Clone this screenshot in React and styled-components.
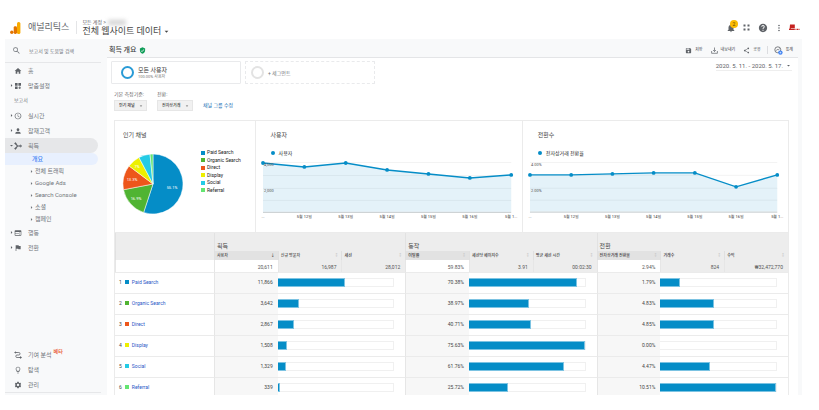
import React from "react";
import styled, { createGlobalStyle } from "styled-components";
import {
  MdAccessTime,
  MdApps,
  MdArrowDropDown,
  MdArrowRight,
  MdFlag,
  MdHelp,
  MdHome,
  MdMoreVert,
  MdNotifications,
  MdOutlineLightbulb,
  MdPerson,
  MdSave,
  MdSearch,
  MdSettings,
  MdShare,
  MdVerifiedUser,
  MdWeb,
} from "react-icons/md";

const GlobalStyle = createGlobalStyle`
  * {
    box-sizing: border-box;
  }

  body {
    margin: 0;
    background: #fff;
    color: #444;
    font-family: Roboto, "Noto Sans CJK KR", sans-serif;
    font-size: 6px;
    line-height: 8px;
  }

  a {
    color: inherit;
    text-decoration: none;
  }

  button, select, input {
    font: inherit;
    color: inherit;
    border: 0;
    padding: 0;
    margin: 0;
    background: none;
  }

  svg {
    display: block;
    flex-shrink: 0;
  }
`;

// Page shell
const Page = styled.div`
  padding: 0 17px 15px 5px;
`;

const Header = styled.header`
  display: flex;
  align-items: center;
  height: 39px;
  padding: 18px 3px 2px 5px;
`;

const Brand = styled.a`
  display: flex;
  align-items: center;
  gap: 7px;
  padding-right: 7px;
  border-right: 1px solid #e4e5e7;
  color: #5f6368;
  font-size: 9px;
  line-height: 13px;
`;

const PropertyPicker = styled.button`
  display: block;
  margin-left: 5px;
  text-align: left;
  color: #444;
`;

const Account = styled.span`
  display: flex;
  align-items: center;
  gap: 2px;
  color: #5f6368;
  font-size: 5px;
  line-height: 7px;
`;

const HiddenName = styled.i`
  width: 18px;
  height: 5px;
  background: #d3d3d3;
  filter: blur(2px);
`;

const Property = styled.span`
  display: flex;
  align-items: center;
  gap: 1px;
  font-size: 9px;
  line-height: 11px;
`;

const HeaderTools = styled.div`
  display: flex;
  align-items: center;
  gap: 7px;
  margin-left: auto;
  color: #5f6368;
`;

const IconButton = styled.button`
  position: relative;
  display: flex;
  justify-content: center;
  width: 9px;
`;

const Badge = styled.span`
  position: absolute;
  top: -3px;
  right: -3px;
  width: 8px;
  height: 8px;
  border-radius: 4px;
  background: #fbbc04;
  color: #5f4300;
  font-size: 5px;
  line-height: 8px;
  text-align: center;
`;

const Body = styled.div`
  display: grid;
  grid-template-columns: 102px minmax(0, 1fr);
  background: #f8f9fa;
`;

// Sidebar
const Sidebar = styled.nav`
  display: flex;
  flex-direction: column;
  color: #70757a;
`;

const Search = styled.label`
  display: flex;
  align-items: center;
  gap: 8px;
  height: 24px;
  margin-right: 6px;
  padding-left: 7px;
  border-bottom: 1px solid #e6e7e9;

  input {
    width: 64px;
    font-size: 5px;
    outline: none;
  }

  input::placeholder {
    color: #70757a;
    opacity: 1;
  }
`;

const NavItem = styled.a`
  display: grid;
  grid-template-columns: 6px 8px auto 1fr;
  align-items: center;
  height: 15px;
  margin-right: 9px;
  padding-left: 3px;
  border-radius: 0 8px 8px 0;
  background: ${({ $open }) => ($open ? "#e6e7e9" : "none")};

  svg {
    color: #5f6368;
  }
`;

const NavLabel = styled.span`
  margin-left: 6px;
`;

const Beta = styled.sup`
  margin-left: 2px;
  color: #e8501c;
  font-size: 5px;
  font-weight: 500;
  line-height: 8px;
  align-self: start;
`;

const NavHeading = styled.div`
  padding-left: 9px;
  font-size: 5px;
  line-height: 15px;
`;

const SubItem = styled.a`
  display: flex;
  align-items: center;
  height: 12px;
  margin-right: 9px;
  padding-left: ${({ $current }) => ($current ? "27px" : "23px")};
  border-radius: 0 6px 6px 0;
  background: ${({ $current }) => ($current ? "#e8f0fe" : "none")};
  color: ${({ $current }) => ($current ? "#4285f4" : "#70757a")};
  font-weight: ${({ $current }) => ($current ? 500 : 400)};
`;

const NavFooter = styled.div`
  margin: auto 6px 2px 0;
  border-bottom: 1px solid #e6e7e9;
`;

// Main area
const Main = styled.main`
  min-width: 0;
`;

const TitleBar = styled.div`
  display: flex;
  align-items: center;
  justify-content: space-between;
  height: 19px;
  margin-right: 4px;
  padding: 4px 5px 0 2px;
  border-bottom: 1px solid #e4e5e7;
`;

const Title = styled.h1`
  display: flex;
  align-items: center;
  gap: 2px;
  margin: 0;
  font-size: 7px;
  font-weight: 500;
`;

const Actions = styled.div`
  display: flex;
  align-items: center;
  gap: 8px;
`;

const Action = styled.button`
  display: flex;
  align-items: center;
  gap: 3px;
  color: #5f6368;
  font-size: 4px;
  font-weight: 500;
`;

const Divider = styled.span`
  width: 1px;
  height: 8px;
  margin: 0 -2px;
  background: #dcdde0;
`;

const Sheet = styled.div`
  margin-right: 4px;
  padding: 3px 9px 0 7px;
  background: #fff;
`;

const SegmentRow = styled.div`
  display: flex;
  gap: 4px;
  margin: 0 -3px;
`;

const Segment = styled.button`
  display: flex;
  align-items: center;
  gap: 4px;
  width: 130px;
  height: 23px;
  padding-left: ${({ $empty }) => ($empty ? "5px" : "9px")};
  border: 1px ${({ $empty }) => ($empty ? "dashed" : "solid")} #e9eaec;
  border-radius: 1px;
  text-align: left;
  color: ${({ $empty }) => ($empty ? "#70757a" : "#333")};
  font-size: ${({ $empty }) => ($empty ? "5px" : "6px")};

  small {
    display: block;
    color: #777;
    font-size: 4px;
    line-height: 5px;
  }
`;

const Ring = styled.span`
  width: 13px;
  height: 13px;
  border: 2px solid ${({ $empty }) => ($empty ? "#e3e3e3" : "#2a9bd6")};
  border-radius: 50%;
`;

const DateRange = styled.button`
  display: flex;
  align-items: center;
  gap: 2px;
  height: 10px;
  margin-left: auto;
  border-bottom: 1px solid #eee;
  color: #5f6368;
`;

const Filters = styled.div`
  display: flex;
  align-items: flex-end;
  gap: 10px;
  margin-top: 6px;
  padding-bottom: 9px;
`;

const Field = styled.label`
  display: flex;
  flex-direction: column;
  gap: 2px;
  width: ${({ $width }) => $width};
  color: #666;
  font-size: 5px;
  white-space: nowrap;
`;

const SelectBox = styled.span`
  display: flex;
  align-items: center;
  height: 11px;
  padding: 0 2px 0 4px;
  border: 1px solid #e6e6e6;
  background: #f1f1f1;

  select {
    flex: 1;
    min-width: 0;
    appearance: none;
    color: #333;
    font-size: 4px;
    font-weight: 500;
    line-height: 8px;
  }
`;

const TextLink = styled.a`
  color: #1a6fb5;
  font-size: 5px;
  line-height: 11px;
`;

// Chart cards
const Charts = styled.section`
  display: grid;
  grid-template-columns: 140fr 268fr 267fr;
  height: 113px;
  border: 1px solid #ebebeb;
`;

const Card = styled.div`
  min-width: 0;
  padding-top: 10px;

  & + & {
    border-left: 1px solid #ebebeb;
  }

  h2 {
    margin: 0 0 10px;
    padding-left: ${({ $pie }) => ($pie ? "8px" : "15px")};
    font-size: 6px;
    font-weight: 400;
  }
`;

const PieRow = styled.div`
  display: flex;
  gap: 17px;
  padding-left: 7px;

  svg {
    margin-top: 4px;
  }
`;

const PieLegend = styled.ul`
  display: flex;
  flex-direction: column;
  justify-content: space-between;
  height: 45px;
  margin: 0;
  padding: 0;
  list-style: none;
  color: #222;
  font-size: 5px;
  line-height: 7px;
  white-space: nowrap;

  li {
    display: flex;
    align-items: center;
    gap: 2px;
  }
`;

const Swatch = styled.i`
  width: 4px;
  height: 4px;
  background: ${({ $color }) => $color};
`;

const LineLegend = styled.div`
  display: flex;
  align-items: center;
  gap: 4px;
  padding-left: 15px;
  color: #222;
  font-size: 5px;
  line-height: 8px;

  i {
    width: 4px;
    height: 4px;
    border-radius: 2px;
    background: #058dc7;
  }
`;

// Report table
const Report = styled.table`
  width: 100%;
  table-layout: fixed;
  border-collapse: separate;
  border-spacing: 0;
  border: solid #ebebeb;
  border-width: 0 1px;
  font-size: 5px;
  line-height: 8px;
`;

const GroupCell = styled.th`
  height: 18px;
  padding: 7px 2px 0;
  border-left: 1px solid #e2e2e2;
  background: #ededed;
  font-size: 6px;
  font-weight: 400;
  text-align: left;
`;

const SortCell = styled.th`
  height: 9px;
  padding: 0;
  border-left: 1px solid #e0e0e0;
  background: ${({ $main }) => ($main ? "#e2e2e2" : "#ededed")};
  font-weight: 500;

  button {
    display: flex;
    justify-content: space-between;
    width: 100%;
    padding: 0 3px 0 2px;
    color: #333;
    font-size: 4px;
    line-height: 9px;
    white-space: nowrap;
  }

  i {
    color: ${({ $sorted }) => ($sorted ? "#333" : "#c4c4c4")};
    font-style: normal;
  }
`;

const TotalCell = styled.td`
  height: 12px;
  padding: 2px 5px 0 0;
  border-left: 1px solid #e6e6e6;
  background: ${({ $main }) => ($main ? "#fff" : "#ededed")};
  color: #555;
  text-align: right;
`;

const Row = styled.tr`
  height: 21px;

  &:last-child {
    height: 18px;
  }

  td {
    padding: 0;
    border-top: 1px solid #ebebeb;
    vertical-align: top;
  }
`;

const Channel = styled.div`
  display: flex;
  align-items: center;
  gap: 3px;
  padding: 5px 0 0 4px;

  a {
    color: #2a56c6;
  }
`;

const ValueCell = styled.td`
  border-left: 1px solid #e6e6e6;
  background: #f7f7f7;
  text-align: right;

  div {
    padding: 5px 5px 0 0;
  }
`;

const Track = styled.div`
  height: 9px;
  margin: 5px 11px 0 0;
  border: 1px solid #f0f0f0;
  border-left: 0;
`;

const Bar = styled.div`
  height: 9px;
  margin-top: -1px;
  border: solid #7cc3e2;
  border-width: ${({ $empty }) => ($empty ? "0" : "1px 1px 1px 0")};
  background: #058dc7;
`;

const channels = [
  { name: "Paid Search", color: "#058dc7", users: 11866, bounce: "70.38%", rate: "1.79%", bars: [58, 93, 17] },
  { name: "Organic Search", color: "#50b432", users: 3642, bounce: "38.97%", rate: "4.83%", bars: [18, 52, 46] },
  { name: "Direct", color: "#ed561b", users: 2867, bounce: "40.71%", rate: "4.85%", bars: [14, 54, 46] },
  { name: "Display", color: "#edef00", users: 1508, bounce: "75.63%", rate: "0.00%", bars: [8, 100, 0] },
  { name: "Social", color: "#24cbe5", users: 1329, bounce: "61.76%", rate: "4.47%", bars: [7, 82, 43] },
  { name: "Referral", color: "#64e572", users: 339, bounce: "25.72%", rate: "10.51%", bars: [2, 34, 100] },
];

const columns = [
  { label: "사용자", total: "20,611", main: true, sorted: true },
  { label: "신규 방문자", total: "16,987" },
  { label: "세션", total: "28,012" },
  { label: "이탈률", total: "59.83%", main: true },
  { label: "세션당 페이지수", total: "3.91" },
  { label: "평균 세션 시간", total: "00:02:30" },
  { label: "전자상거래 전환율", total: "2.94%", main: true },
  { label: "거래수", total: "824" },
  { label: "수익", total: "₩32,472,770" },
];

const days = ["5월 12일", "5월 13일", "5월 14일", "5월 15일", "5월 16일", "5월 1..."];

const Logo = () => (
  <svg width="11" height="12" viewBox="0 0 11 12">
    <rect x="7" y="0" width="3.4" height="12" rx="1.5" fill="#f9ab00" />
    <rect x="3.7" y="4.2" width="3.3" height="7.8" rx="1.4" fill="#e37400" />
    <circle cx="1.8" cy="10.3" r="1.7" fill="#e37400" />
  </svg>
);

const CustomizeIcon = () => (
  <svg width="8" height="8" viewBox="0 0 8 8" fill="currentColor">
    <path d="M1 1h2.6v2.8H1zM4.4 1H7v2.8H4.4zM1 4.6h2.6V7H1zM5.3 4.6h.9v.8H7v.8h-.8V7h-.9v-.8h-.9v-.8h.9z" />
  </svg>
);

const AcquisitionIcon = () => (
  <svg width="8" height="8" viewBox="0 0 8 8" fill="none" stroke="currentColor">
    <path d="M1.2 1.2 3.6 4 1.2 6.8M3.6 4h3" strokeWidth="1.2" />
    <circle cx="1.4" cy="1.4" r=".6" />
    <circle cx="1.4" cy="6.6" r=".6" />
    <circle cx="6.6" cy="4" r=".8" />
  </svg>
);

const AttributionIcon = () => (
  <svg width="8" height="8" viewBox="0 0 8 8" fill="none" stroke="currentColor" strokeWidth=".8">
    <path d="M1.8 1.5h3a1.2 1.2 0 0 1 0 2.5H3a1.2 1.2 0 0 0 0 2.5h3.2" />
    <circle cx="1.4" cy="1.5" r=".6" fill="currentColor" />
    <circle cx="6.6" cy="6.5" r=".7" fill="currentColor" />
  </svg>
);

const ExportIcon = () => (
  <svg width="7" height="7" viewBox="0 0 7 7" fill="none" stroke="currentColor" strokeWidth=".7">
    <path d="M3.5.5v4M2 3l1.5 1.5L5 3M.6 4v2.3h5.8V4" />
  </svg>
);

const InsightsIcon = () => (
  <svg width="9" height="9" viewBox="0 0 9 9" fill="none">
    <circle cx="3.8" cy="3.8" r="3" stroke="#5f6368" strokeWidth=".8" />
    <path d="m2 4.8 1.3-1.5.9.8 1.4-1.6" stroke="#5f6368" strokeWidth=".7" />
    <circle cx="6.4" cy="6.6" r="2.2" fill="#4285f4" />
    <path d="M5.5 6.6h1.8M6.4 5.7v1.8" stroke="#fff" strokeWidth=".5" />
  </svg>
);

const GridIcon = () => (
  <svg width="7" height="7" viewBox="0 0 7 7" fill="currentColor">
    <path d="M.5.5h2v2h-2zM4.5.5h2v2h-2zM.5 4.5h2v2h-2zM4.5 4.5h2v2h-2z" />
  </svg>
);

const ProfileMark = () => (
  <svg width="11" height="7" viewBox="0 0 11 7" fill="#c5221f">
    <path d="M1 .5h4.8v3.7H2.2L.5 6z" />
    <path d="M0 4.7h5.8V6H0zM6.5 4.8h1V6h-1zM8 4.8h1V6H8zM9.5 4.8h1V6h-1z" />
  </svg>
);

const Pie = () => {
  const total = channels.reduce((sum, c) => sum + c.users, 0);
  const point = (share) => {
    const angle = share * Math.PI * 2;
    return `${30 + 30 * Math.sin(angle)} ${30 - 30 * Math.cos(angle)}`;
  };
  let start = 0;

  return (
    <svg width="62" height="62" viewBox="-1 -1 62 62">
      {channels.map((c) => {
        const end = start + c.users / total;
        const d = `M30 30 L${point(start)} A30 30 0 ${end - start > 0.5 ? 1 : 0} 1 ${point(end)} Z`;
        start = end;
        return <path key={c.name} d={d} fill={c.color} stroke="#fff" strokeWidth=".5" />;
      })}
      <g fill="#fff" fontSize="4" textAnchor="middle">
        <text x="49" y="35">55.1%</text>
        <text x="13" y="46">16.9%</text>
        <text x="9" y="27">13.3%</text>
        <text x="14" y="14">7%</text>
      </g>
    </svg>
  );
};

const LineChart = ({ values, labels }) => {
  const points = values.map((y, i) => [7 + i * 41.5, y]);
  const line = points.map((p) => p.join(",")).join(" ");

  return (
    <svg width="100%" viewBox="0 0 267 66">
      <path d="M7 5.5h249M7 18.5h249M7 31.5h249M7 43.5h249" stroke="#f3f3f3" />
      <polygon points={`7,55 ${line} 256,55`} fill="#058dc7" fillOpacity=".11" />
      <path d="M7 55.5h249" stroke="#c4cacd" />
      <polyline points={line} fill="none" stroke="#058dc7" strokeWidth="1.4" />
      {points.map(([x, y]) => (
        <circle key={x} cx={x} cy={y} r="1.9" fill="#058dc7" />
      ))}
      <g fill="#555" fontSize="4">
        <text x="8" y="9">{labels[0]}</text>
        <text x="8" y="35">{labels[1]}</text>
      </g>
      <g fill="#333" fontSize="4" textAnchor="middle">
        <text x="7" y="61">...</text>
        {days.map((day, i) => (
          <text key={day} x={7 + (i + 1) * 41.5} y="61">{day}</text>
        ))}
      </g>
    </svg>
  );
};

const NavRow = ({ icon, label, arrow, open, beta }) => (
  <NavItem href="#" $open={open}>
    <span>{open ? <MdArrowDropDown size={7} /> : arrow && <MdArrowRight size={7} />}</span>
    {icon}
    <NavLabel>{label}</NavLabel>
    {beta && <Beta>{beta}</Beta>}
  </NavItem>
);

const SideNav = () => (
  <Sidebar>
    <Search>
      <MdSearch size={9} />
      <input type="text" aria-label="검색" placeholder="보고서 및 도움말 검색" />
    </Search>
    <NavRow icon={<MdHome size={8} />} label="홈" />
    <NavRow icon={<CustomizeIcon />} label="맞춤설정" arrow />
    <NavHeading>보고서</NavHeading>
    <NavRow icon={<MdAccessTime size={8} />} label="실시간" arrow />
    <NavRow icon={<MdPerson size={8} />} label="잠재고객" arrow />
    <NavRow icon={<AcquisitionIcon />} label="획득" open />
    <SubItem href="#" $current>개요</SubItem>
    {["전체 트래픽", "Google Ads", "Search Console", "소셜", "캠페인"].map((label) => (
      <SubItem href="#" key={label}>
        <MdArrowRight size={7} />
        {label}
      </SubItem>
    ))}
    <NavRow icon={<MdWeb size={8} />} label="행동" arrow />
    <NavRow icon={<MdFlag size={8} />} label="전환" arrow />
    <NavFooter>
      <NavRow icon={<AttributionIcon />} label="기여 분석" beta="베타" />
      <NavRow icon={<MdOutlineLightbulb size={8} />} label="탐색" />
      <NavRow icon={<MdSettings size={8} />} label="관리" />
    </NavFooter>
  </Sidebar>
);

const ReportTable = () => (
  <Report>
    <colgroup>
      <col style={{ width: "14.7%" }} />
      {columns.map((c) => (
        <col key={c.label} />
      ))}
    </colgroup>
    <thead>
      <tr>
        <GroupCell />
        <GroupCell colSpan={3}>획득</GroupCell>
        <GroupCell colSpan={3}>동작</GroupCell>
        <GroupCell colSpan={3}>전환</GroupCell>
      </tr>
      <tr>
        <SortCell />
        {columns.map((c) => (
          <SortCell key={c.label} $main={c.main} $sorted={c.sorted}>
            <button type="button">
              {c.label}
              <i>{c.sorted ? "↓" : "↕"}</i>
            </button>
          </SortCell>
        ))}
      </tr>
    </thead>
    <tbody>
      <tr>
        <TotalCell $main />
        {columns.map((c) => (
          <TotalCell key={c.label} $main={c.main}>{c.total}</TotalCell>
        ))}
      </tr>
      {channels.map((c, i) => (
        <Row key={c.name}>
          <td>
            <Channel>
              {i + 1}
              <Swatch $color={c.color} />
              <a href="#">{c.name}</a>
            </Channel>
          </td>
          {[c.users.toLocaleString("en-US"), c.bounce, c.rate].map((value, n) => (
            <React.Fragment key={n}>
              <ValueCell>
                <div>{value}</div>
              </ValueCell>
              <td colSpan={2}>
                <Track>
                  <Bar $empty={c.bars[n] === 0} style={{ width: `${c.bars[n]}%` }} />
                </Track>
              </td>
            </React.Fragment>
          ))}
        </Row>
      ))}
    </tbody>
  </Report>
);

const App = () => (
  <>
    <GlobalStyle />
    <Page>
      <Header>
        <Brand href="#">
          <Logo />
          애널리틱스
        </Brand>
        <PropertyPicker type="button">
          <Account>
            모든 계정 &gt; <HiddenName />
          </Account>
          <Property>
            전체 웹사이트 데이터 <MdArrowDropDown size={9} />
          </Property>
        </PropertyPicker>
        <HeaderTools>
          <IconButton type="button" aria-label="알림">
            <MdNotifications size={10} />
            <Badge>2</Badge>
          </IconButton>
          <IconButton type="button" aria-label="앱">
            <GridIcon />
          </IconButton>
          <IconButton type="button" aria-label="도움말">
            <MdHelp size={10} />
          </IconButton>
          <IconButton type="button" aria-label="더보기">
            <MdMoreVert size={10} />
          </IconButton>
          <IconButton type="button" aria-label="프로필">
            <ProfileMark />
          </IconButton>
        </HeaderTools>
      </Header>
      <Body>
        <SideNav />
        <Main>
          <TitleBar>
            <Title>
              획득 개요 <MdVerifiedUser size={7} color="#0f9d58" />
            </Title>
            <Actions>
              <Action type="button">
                <MdSave size={7} />
                저장
              </Action>
              <Action type="button">
                <ExportIcon />
                내보내기
              </Action>
              <Action type="button">
                <MdShare size={7} />
                공유
              </Action>
              <Divider />
              <Action type="button">
                <InsightsIcon />
                통계
              </Action>
            </Actions>
          </TitleBar>
          <Sheet>
            <SegmentRow>
              <Segment type="button">
                <Ring />
                <span>
                  모든 사용자
                  <small>100.00% 사용자</small>
                </span>
              </Segment>
              <Segment type="button" $empty>
                <Ring $empty />
                + 세그먼트
              </Segment>
              <DateRange type="button">
                2020. 5. 11. - 2020. 5. 17. <MdArrowDropDown size={7} />
              </DateRange>
            </SegmentRow>
            <Filters>
              <Field $width="33px">
                기본 측정기준:
                <SelectBox>
                  <select>
                    <option>인기 채널</option>
                  </select>
                  <MdArrowDropDown size={6} />
                </SelectBox>
              </Field>
              <Field $width="36px">
                전환:
                <SelectBox>
                  <select>
                    <option>전자상거래</option>
                  </select>
                  <MdArrowDropDown size={6} />
                </SelectBox>
              </Field>
              <TextLink href="#">채널 그룹 수정</TextLink>
            </Filters>
            <Charts>
              <Card $pie>
                <h2>인기 채널</h2>
                <PieRow>
                  <Pie />
                  <PieLegend>
                    {channels.map((c) => (
                      <li key={c.name}>
                        <Swatch $color={c.color} />
                        {c.name}
                      </li>
                    ))}
                  </PieLegend>
                </PieRow>
              </Card>
              <Card>
                <h2>사용자</h2>
                <LineLegend>
                  <i />
                  사용자
                </LineLegend>
                <LineChart values={[6, 10, 6, 13, 17, 21, 18]} labels={["4,000", "2,000"]} />
              </Card>
              <Card>
                <h2>전환수</h2>
                <LineLegend>
                  <i />
                  전자상거래 전환율
                </LineLegend>
                <LineChart values={[18, 18, 17, 16, 16, 30, 18]} labels={["4.00%", "2.00%"]} />
              </Card>
            </Charts>
            <ReportTable />
          </Sheet>
        </Main>
      </Body>
    </Page>
  </>
);

export default App;
